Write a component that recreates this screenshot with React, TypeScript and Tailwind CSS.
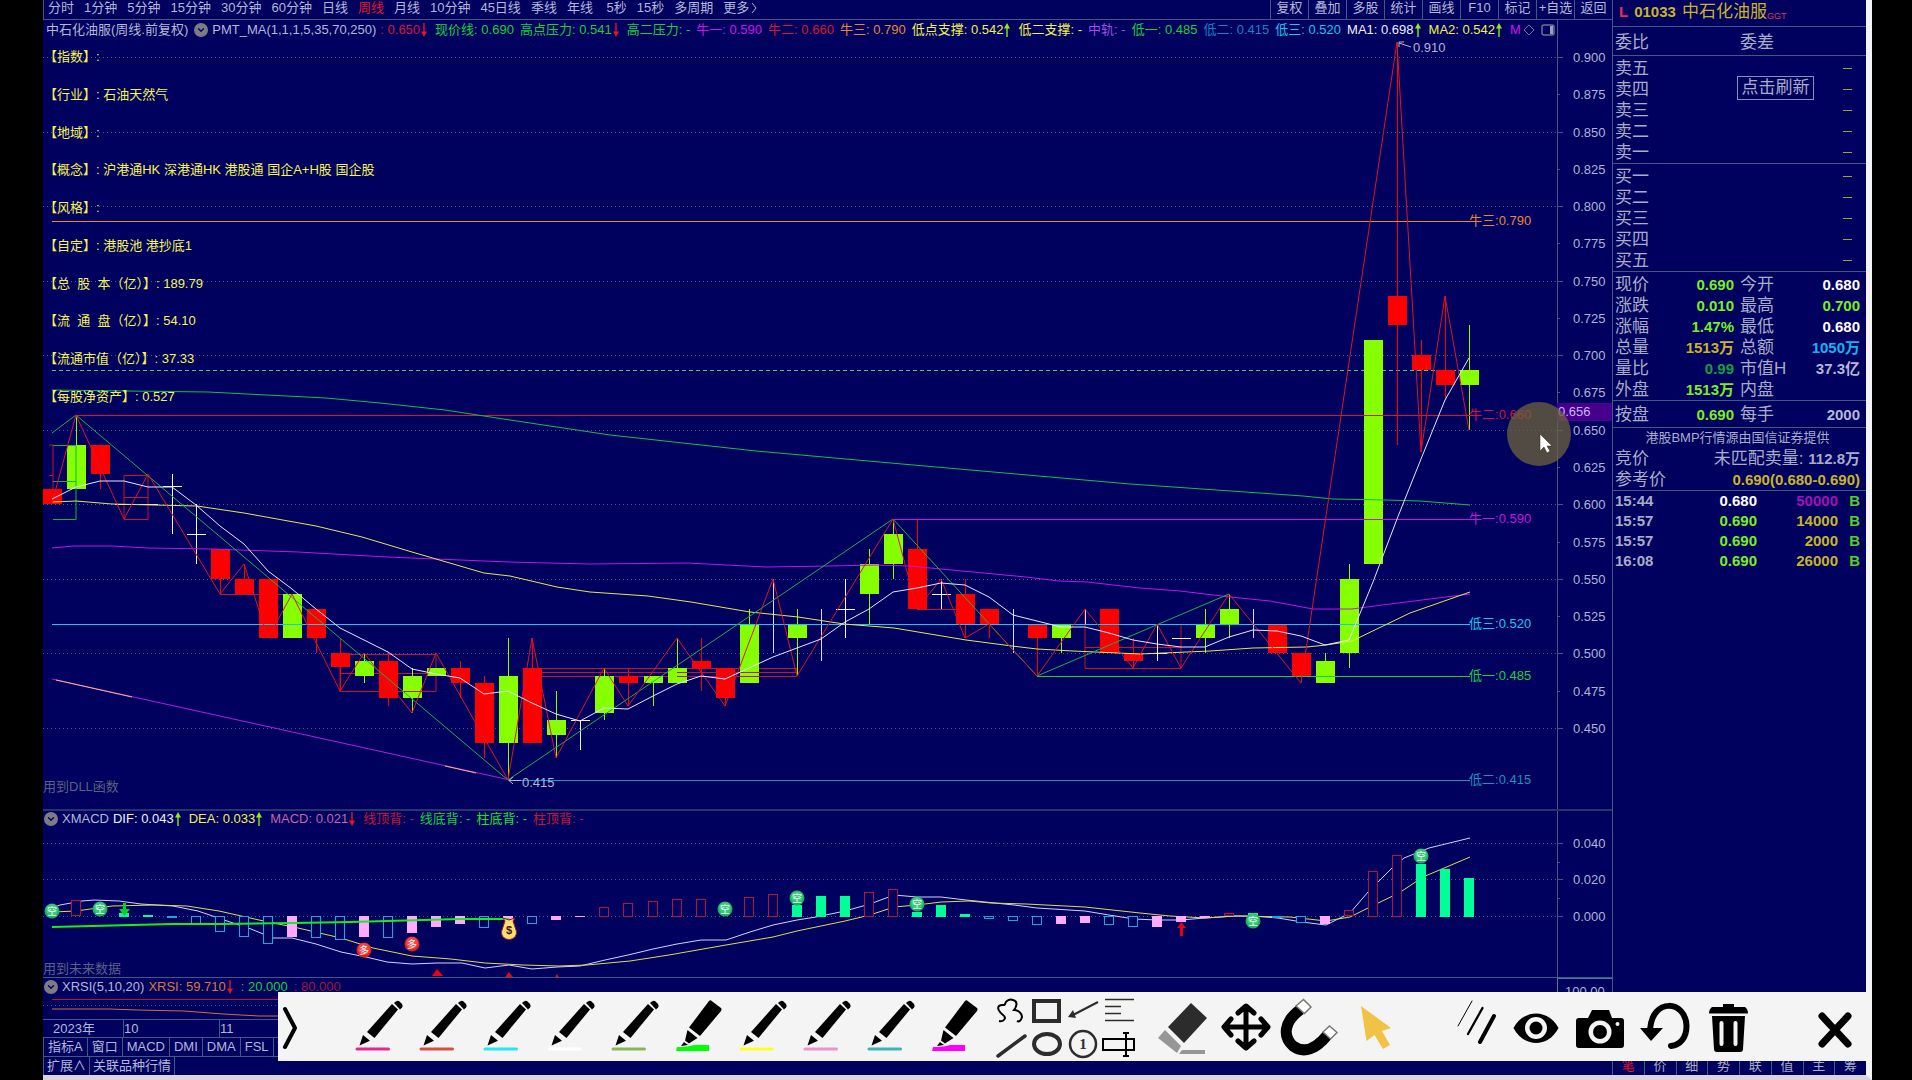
import type { ReactNode } from "react"
import { ChevronDown } from "lucide-react"

const FONT = "font-['Liberation_Sans','Noto_Sans_CJK_SC',sans-serif]"

type Candle = [top: number, bottom: number, high: number, low: number, kind: "up" | "down" | "doji" | "none"]

// one entry per week: body top, body bottom, high, low
const CANDLES: Candle[] = [
  [0.61, 0.6, 0.61, 0.6, "down"],
  [0.64, 0.61, 0.66, 0.61, "up"],
  [0.64, 0.62, 0.64, 0.61, "down"],
  [0.6, 0.6, 0.6, 0.6, "doji"],
  [0.6, 0.6, 0.6, 0.6, "doji"],
  [0.612, 0.612, 0.62, 0.58, "doji"],
  [0.58, 0.58, 0.6, 0.56, "doji"],
  [0.57, 0.55, 0.57, 0.54, "down"],
  [0.55, 0.54, 0.56, 0.54, "down"],
  [0.55, 0.51, 0.55, 0.51, "down"],
  [0.54, 0.51, 0.54, 0.51, "up"],
  [0.53, 0.51, 0.53, 0.5, "down"],
  [0.5, 0.491, 0.51, 0.475, "down"],
  [0.495, 0.485, 0.5, 0.48, "up"],
  [0.495, 0.47, 0.5, 0.465, "down"],
  [0.485, 0.47, 0.49, 0.46, "up"],
  [0.49, 0.485, 0.49, 0.485, "up"],
  [0.49, 0.48, 0.495, 0.47, "down"],
  [0.48, 0.44, 0.485, 0.43, "down"],
  [0.485, 0.44, 0.51, 0.415, "up"],
  [0.49, 0.44, 0.51, 0.44, "down"],
  [0.455, 0.445, 0.475, 0.43, "up"],
  [0.455, 0.455, 0.455, 0.435, "doji"],
  [0.485, 0.46, 0.49, 0.455, "up"],
  [0.485, 0.48, 0.49, 0.465, "down"],
  [0.485, 0.48, 0.485, 0.465, "up"],
  [0.49, 0.48, 0.51, 0.48, "up"],
  [0.495, 0.49, 0.51, 0.475, "down"],
  [0.49, 0.47, 0.49, 0.465, "down"],
  [0.52, 0.48, 0.53, 0.48, "up"],
  [0.52, 0.52, 0.55, 0.5, "none"],
  [0.52, 0.51, 0.53, 0.485, "up"],
  [0.51, 0.51, 0.53, 0.495, "none"],
  [0.53, 0.53, 0.55, 0.51, "doji"],
  [0.56, 0.54, 0.57, 0.52, "up"],
  [0.58, 0.56, 0.59, 0.55, "up"],
  [0.57, 0.53, 0.59, 0.53, "down"],
  [0.54, 0.54, 0.55, 0.53, "doji"],
  [0.54, 0.52, 0.55, 0.51, "down"],
  [0.53, 0.52, 0.53, 0.51, "down"],
  [0.52, 0.52, 0.53, 0.5, "none"],
  [0.52, 0.51, 0.52, 0.485, "down"],
  [0.52, 0.51, 0.52, 0.5, "up"],
  [0.52, 0.52, 0.53, 0.52, "none"],
  [0.53, 0.5, 0.53, 0.5, "down"],
  [0.5, 0.495, 0.51, 0.49, "down"],
  [0.5, 0.5, 0.52, 0.495, "doji"],
  [0.51, 0.51, 0.51, 0.51, "doji"],
  [0.52, 0.51, 0.53, 0.5, "up"],
  [0.53, 0.52, 0.54, 0.51, "up"],
  [0.52, 0.52, 0.53, 0.51, "none"],
  [0.52, 0.5, 0.52, 0.5, "down"],
  [0.5, 0.485, 0.5, 0.48, "down"],
  [0.495, 0.48, 0.5, 0.48, "up"],
  [0.55, 0.5, 0.56, 0.49, "up"],
  [0.71, 0.56, 0.71, 0.56, "up"],
  [0.74, 0.72, 0.91, 0.64, "down"],
  [0.7, 0.69, 0.71, 0.635, "down"],
  [0.69, 0.68, 0.74, 0.67, "down"],
  [0.69, 0.68, 0.72, 0.65, "up"],
]

const MA_FAST = [
  499, 487, 481, 481, 487, 487, 505, 526, 544, 571, 589, 609, 628, 640, 652, 669, 674, 678, 694, 691,
  703, 714, 721, 708, 709, 696, 684, 676, 679, 668, 657, 648, 639, 622, 609, 592, 588, 583, 585, 597,
  615, 621, 627, 627, 633, 640, 644, 647, 647, 637, 630, 631, 636, 645, 640, 582, 519, 459, 400, 358,
]

const MA_YELLOW =
  "52,502 76,501 112,504 197,506 244,513 316,526 362,537 412,552 484,573 510,576 557,587 590,592 648,596 691,602 750,612 798,617 844,624 894,628 966,640 1012,646 1037,649 1073,651 1140,654 1210,651 1253,648 1307,647 1326,645 1352,641 1410,613 1470,592"
const MA_MAGENTA =
  "52,548 73,546 112,546 148,548 212,549 298,552 387,557 509,562 590,564 687,563 766,567 830,566 876,565 909,566 941,569 1026,577 1059,581 1087,582 1140,588 1180,591 1230,597 1270,601 1313,609 1352,609 1390,604 1470,594"
const MA_GREEN =
  "52,390 126,391 208,392 247,394 326,398 380,403 445,410 510,420 590,432 610,435 756,451 902,464 1073,479 1130,484 1303,496 1333,499 1385,500 1420,501 1470,505"
const DIF =
  "52,908 60,905 82,901 94,900 119,901 141,904 173,906 198,911 230,922 251,929 273,938 292,938 316,944 341,952 366,957 387,962 412,964 437,963 462,963 485,968 509,965 532,969 557,967 580,966 605,960 628,955 653,949 677,944 701,940 726,940 750,932 773,925 797,920 816,917 845,911 870,904 894,895 917,897 941,897 966,900 1014,905 1037,908 1085,911 1109,915 1134,919 1157,920 1181,920 1205,918 1235,916 1252,916 1278,918 1302,922 1326,925 1350,913 1368,892 1393,867 1404,858 1429,848 1470,838"
const DEA =
  "52,912 76,911 112,906 155,905 187,906 219,911 259,920 298,928 341,938 373,948 412,956 451,959 485,963 523,965 559,966 587,965 630,961 669,955 726,945 773,937 797,931 845,921 870,915 894,907 917,905 941,902 969,901 991,903 1026,904 1085,907 1140,913 1170,916 1205,918 1235,916 1290,917 1326,921 1350,917 1374,905 1399,893 1423,877 1470,857"

const RED_ZIGZAG: [number, number][] = [
  [0, 0.601], [1, 0.66], [3, 0.59], [4, 0.62], [7, 0.54], [8, 0.56], [9, 0.51], [10, 0.54], [12, 0.475],
  [13, 0.5], [15, 0.46], [16, 0.5], [19, 0.415], [20, 0.51], [21, 0.43], [23, 0.49], [24, 0.465],
  [26, 0.51], [28, 0.465], [30, 0.55], [31, 0.485], [35, 0.59], [36, 0.53], [37, 0.55], [38, 0.51],
  [39, 0.52], [41, 0.485], [43, 0.53], [45, 0.49], [46, 0.52], [47, 0.49], [49, 0.54], [52, 0.48],
  [56, 0.91], [57, 0.635], [58, 0.74], [59, 0.65],
]
const GREEN_ZIGZAG: [number, number][] = [[0, 0.648], [1, 0.66], [19, 0.415], [35, 0.59], [41, 0.485], [49, 0.54]]

const LEVELS = [
  { from: 0, price: 0.79, color: "#e8853c", name: "牛三", value: "0.790" },
  { from: 1, price: 0.66, color: "#d4143c", name: "牛二", value: "0.660" },
  { from: 35, price: 0.59, color: "#c814dc", name: "牛一", value: "0.590" },
  { from: 0, price: 0.52, color: "#14c8f0", name: "低三", value: "0.520" },
  { from: 41, price: 0.485, color: "#14d23c", name: "低一", value: "0.485" },
  { from: 19, price: 0.415, color: "#1496be", name: "低二", value: "0.415" },
]

type Bar = [index: number, from: number, to: number, kind: "red" | "cyan" | "pink" | "green"]
const BARS: Bar[] = [
  [1, 900, 916, "red"], [3, 913, 917, "green"], [4, 915, 917, "green"], [5, 916, 918, "cyan"],
  [6, 916, 924, "cyan"], [7, 916, 932, "cyan"], [8, 916, 937, "cyan"], [9, 916, 944, "cyan"],
  [10, 916, 937, "pink"], [11, 916, 938, "cyan"], [12, 916, 940, "cyan"], [13, 916, 937, "pink"],
  [14, 916, 938, "cyan"], [15, 916, 933, "pink"], [16, 916, 927, "pink"], [17, 916, 924, "pink"],
  [18, 916, 928, "cyan"], [19, 916, 919, "pink"], [20, 916, 924, "cyan"], [21, 916, 920, "pink"],
  [22, 916, 917, "pink"], [23, 907, 917, "red"], [24, 903, 917, "red"], [25, 901, 917, "red"],
  [26, 899, 917, "red"], [27, 899, 917, "red"], [29, 897, 917, "red"], [30, 894, 917, "red"],
  [31, 905, 917, "green"], [32, 896, 917, "green"], [33, 896, 917, "green"], [34, 892, 917, "red"],
  [35, 889, 917, "red"], [36, 912, 917, "green"], [37, 905, 917, "green"], [38, 914, 917, "green"],
  [39, 916, 919, "cyan"], [40, 916, 921, "cyan"], [41, 916, 925, "cyan"], [42, 916, 924, "pink"],
  [43, 916, 923, "pink"], [44, 916, 925, "cyan"], [45, 916, 927, "cyan"], [46, 916, 927, "pink"],
  [47, 916, 922, "pink"], [48, 916, 918, "pink"], [49, 913, 916, "red"], [50, 913, 916, "green"],
  [51, 916, 918, "cyan"], [52, 916, 923, "cyan"], [53, 916, 924, "pink"], [54, 910, 916, "red"],
  [55, 871, 917, "red"], [56, 855, 917, "red"], [57, 864, 917, "green"], [58, 869, 917, "green"],
  [59, 878, 917, "green"],
]

const px = (i: number) => Math.round(52 + i * 24.02)
const py = (p: number) => Math.round(57 + (0.9 - p) * 1491)
const path = (pts: [number, number][]) => pts.map(([i, p]) => `${px(i)},${py(p)}`).join(" ")

const CANDLE_COLOR = { up: "#86ff00", down: "#ff0000", doji: "#f4f4ff", none: "#d8d8f0" }
const MAJOR = [0.9, 0.85, 0.8, 0.75, 0.7, 0.65, 0.6, 0.55, 0.5, 0.45]
const MINOR = [0.875, 0.825, 0.775, 0.725, 0.675, 0.625, 0.575, 0.525, 0.475]

function PriceChart() {
  return (
    <svg viewBox="43 20 1569 789" className="block h-auto w-full" fontSize={13}>
      <g stroke="#465590" strokeDasharray="1 3">
        {MAJOR.map((p) => (
          <line key={p} x1={43} x2={1557} y1={py(p) + 0.5} y2={py(p) + 0.5} />
        ))}
      </g>
      <line x1={52} x2={1470} y1={370.5} y2={370.5} stroke="#3cd264" strokeDasharray="4 3" />

      <g fill="none">
        <polyline points="52,679 510,780" stroke="#b41ee0" />
        <polyline points="56,680 132,697" stroke="#ffb08c" />
        <polyline points="445,766 476,773" stroke="#ffb08c" />
        <g stroke="#c81428">
          <path d="M49 445H53V489M49 475.5H53" />
          <path d={`M${px(3)} 475.5H${px(4)}V519.5H${px(3)}ZM${px(3)} 497.5H${px(4)}`} />
          <path d={`M${px(7)} 594.5H${px(10)}`} />
          <path d={`M${px(12)} 654.5H${px(16)}V691.5H${px(12)}ZM${px(12)} 673.5H${px(16)}`} />
          <path d={`M${px(20)} 668.5H${px(31)}M${px(20)} 672.5H${px(31)}M${px(20)} 676.5H${px(31)}V668`} />
          <path d={`M${px(36)} 609.5H${px(38)}`} />
          <path d={`M${px(43)} 609V668.5H${px(47)}V624M${px(43)} 647.5H${px(47)}`} />
        </g>
      </g>

      {CANDLES.map(([top, bottom, high, low, kind], i) => (
        <g key={i} fill={CANDLE_COLOR[kind]}>
          {high > low && (
            <rect x={px(i)} y={py(high)} width={1} height={py(low) - py(high)} />
          )}
          {kind !== "none" && (
            <rect x={px(i) - 9} y={py(top)} width={19} height={Math.max(py(bottom) - py(top), 1)} />
          )}
        </g>
      ))}
      <path d="M53 445.5H76V519.5H53M53 481.5H76" fill="none" stroke="#14b43c" />
      <path
        d={`M${px(12)} 691.5H${px(16)}M${px(26)} 672.5H${px(31)}M${px(26)} 676.5H${px(31)}`}
        fill="none"
        stroke="#c81428"
      />

      {LEVELS.map((l) => (
        <g key={l.name}>
          <line x1={px(l.from)} x2={1470} y1={py(l.price) + 0.5} y2={py(l.price) + 0.5} stroke={l.color} />
          <text x={1469} y={py(l.price) + 4} fill={l.color}>{l.name}:{l.value}</text>
        </g>
      ))}

      <g fill="none">
        <polyline points={MA_GREEN} stroke="#14be50" />
        <polyline points={MA_MAGENTA} stroke="#c014e6" />
        <polyline points={MA_YELLOW} stroke="#e6e650" />
        <polyline points={path(GREEN_ZIGZAG)} stroke="#14b44b" />
        <polyline points={path(RED_ZIGZAG)} stroke="#dc1428" />
        <polyline points={MA_FAST.map((y, i) => `${px(i)},${y}`).join(" ")} stroke="#e6e6ff" />
      </g>

      <g fill="none" stroke="#b4b4d2">
        <path d="M1399 43L1411 47M1399 47V42H1404" />
        <path d="M509 780.5H521M513 777L509 780.5L513 784" />
      </g>
      <g fill="#b4b4d2">
        <text x={1413} y={52}>0.910</text>
        <text x={522} y={787}>0.415</text>
        <text x={43} y={791} fill="#5c6080">用到DLL函数</text>
      </g>

      <g stroke="#3c5a82">
        <line x1={1557.5} x2={1557.5} y1={20} y2={809} />
        {MAJOR.map((p) => <line key={p} x1={1557} x2={1563} y1={py(p) + 0.5} y2={py(p) + 0.5} />)}
        {MINOR.map((p) => <line key={p} x1={1557} x2={1560} y1={py(p) + 0.5} y2={py(p) + 0.5} />)}
      </g>
      <g fill="#b0b4d4">
        {[...MAJOR, ...MINOR].map((p) => <text key={p} x={1573} y={py(p) + 5}>{p.toFixed(3)}</text>)}
      </g>
      <rect x={1557} y={403} width={55} height={18} fill="#46008c" />
      <text x={1558} y={416} fill="#c8b4ff">0.656</text>

      <circle cx={1539} cy={434} r={32} fill="#6e643c" fillOpacity={0.75} />
      <path d="M1540 434V451L1544 447L1547 453L1550 451L1547 446L1552 446Z" fill="#fff" stroke="#222" strokeWidth={0.5} />
    </svg>
  )
}

function Badge({ i, y, glyph }: { i: number; y: number; glyph: "空" | "多" }) {
  return (
    <g>
      <circle cx={px(i)} cy={y} r={7.5} fill={glyph === "空" ? "#14b45a" : "#e61e1e"} />
      <circle cx={px(i)} cy={y - 1} r={6} fill={glyph === "空" ? "#3cc87d" : "#f04646"} />
      <text x={px(i)} y={y + 4} fontSize={10} textAnchor="middle" fill="#f0fff4">{glyph}</text>
    </g>
  )
}

const BAR_COLOR = { red: "#b4143c", cyan: "#14aadc", pink: "#ffaaff", green: "#00ff96" }

function MacdChart() {
  return (
    <svg viewBox="43 811 1569 166" className="block h-auto w-full" fontSize={13}>
      <g stroke="#465590" strokeDasharray="1 3">
        <path d="M43 843.5H1557M43 879.5H1557M43 916.5H1557" />
      </g>
      <g fill="none">
        <polyline points={DIF} stroke="#d2d2ff" />
        <polyline points={DEA} stroke="#dcdc50" />
      </g>
      {BARS.map(([i, a, b, kind]) => {
        const solid = kind === "pink" || kind === "green" || b - a < 3
        return (
          <rect
            key={i}
            x={px(i) - (solid ? 5 : 4.5)}
            y={solid ? a : a + 0.5}
            width={solid ? 10 : 9}
            height={solid ? b - a : b - a - 1}
            fill={solid ? BAR_COLOR[kind] : "#00005e"}
            stroke={solid ? "none" : BAR_COLOR[kind]}
          />
        )
      })}
      <polyline points="52,927 173,924 223,924 294,923 351,922 459,919 509,919" fill="none" stroke="#14f014" strokeWidth={2} />
      <Badge i={0} y={911} glyph="空" />
      <Badge i={2} y={909} glyph="空" />
      <Badge i={28} y={909} glyph="空" />
      <Badge i={31} y={898} glyph="空" />
      <Badge i={36} y={904} glyph="空" />
      <Badge i={50} y={921} glyph="空" />
      <Badge i={57} y={856} glyph="空" />
      <Badge i={13} y={950} glyph="多" />
      <Badge i={15} y={944} glyph="多" />
      <path d="M123 903H126V909H130L124.500 916L119 909H123Z" fill="#00d228" />
      <path d="M1180 936V928H1177L1181.500 922L1186 928H1183V936Z" fill="#e60014" />
      <path d="M432 976L437 969L443 976ZM505 977L509 972L513 977ZM555 977L557 974L559 977Z" fill="#f00014" />
      <g>
        <path d="M505 921L503 918L509 920L515 918L513 921L516 930A7.500 7 0 1 1 502 930Z" fill="#ffdc78" stroke="#8c2814" />
        <text x={509} y={934} fontSize={11} fontWeight="bold" textAnchor="middle" fill="#3c1400">$</text>
      </g>
      <text x={43} y={973} fill="#5c6080">用到未来数据</text>
      <path d="M1557.500 811V977M1557 843.500H1563M1557 879.500H1563M1557 916.500H1563M1557 862.500H1560M1557 898.500H1560" stroke="#3c5a82" />
      <g fill="#b0b4d4">
        <text x={1573} y={848}>0.040</text>
        <text x={1573} y={884}>0.020</text>
        <text x={1573} y={921}>0.000</text>
      </g>
    </svg>
  )
}

function RsiChart() {
  return (
    <svg viewBox="43 978 1569 41" className="block h-auto w-full" fontSize={13}>
      <line x1={43} x2={1557} y1={1005.5} y2={1005.5} stroke="#465590" strokeDasharray="1 3" />
      <line x1={52} x2={1470} y1={999.5} y2={999.5} stroke="#b4143c" />
      <polyline points="52,1009 110,1009 137,1010 184,1011 223,1014 259,1016 278,1016" fill="none" stroke="#d26e3c" />
      <path d="M1557.500 978V1019M1557 978.500H1612" stroke="#3c8296" />
      <text x={1565} y={996} fill="#b0b4d4">100.00</text>
    </svg>
  )
}

function Arrow({ up }: { up?: boolean }) {
  return (
    <svg viewBox="0 0 8 14" className={`h-3.5 w-2 shrink-0 ${up ? "text-[#86f01e]" : "rotate-180 text-[#e61428]"}`}>
      <path d="M4 14V3" stroke="currentColor" strokeWidth={1.4} />
      <path d="M1 5.500L4 0L7 5.500Z" fill="currentColor" />
    </svg>
  )
}

interface ReadingProps {
  name?: string
  value: string
  color: string
  arrow?: "up" | "down"
}

function Reading({ name = "", value, color, arrow }: ReadingProps) {
  return (
    <span className={`flex items-center ${color} ${arrow ? "pr-[7px]" : "pr-1.5"}`}>
      {name}: {value}
      {arrow && <Arrow up={arrow === "up"} />}
    </span>
  )
}

function Collapse({ label }: { label: string }) {
  return (
    <button aria-label={label} className="flex size-3.5 items-center justify-center rounded-full bg-[#7c7c84] text-[#00005e]">
      <ChevronDown size={10} strokeWidth={3} />
    </button>
  )
}

const PERIODS = [
  "分时", "1分钟", "5分钟", "15分钟", "30分钟", "60分钟", "日线", "周线", "月线",
  "10分钟", "45日线", "季线", "年线", " 5秒", "15秒", "多周期",
]
const ACTIONS = ["复权", "叠加", "多股", "统计", "画线", "F10", "标记", "+自选", "返回"]

const FACTS = [
  "【指数】:", "【行业】: 石油天然气", "【地域】:", "【概念】: 沪港通HK 深港通HK 港股通 国企A+H股 国企股",
  "【风格】:", "【自定】: 港股池 港抄底1", "【总  股  本（亿）】: 189.79", "【流  通  盘（亿）】: 54.10",
  "【流通市值（亿）】: 37.33", "【每股净资产】: 0.527",
]

function PeriodBar() {
  return (
    <nav className="flex h-5 items-stretch border-b border-l border-[#3c5a82] text-[13px] leading-4 text-[#b4b8d8]">
      <div className="flex flex-1 items-start gap-2.5 pl-1">
        {PERIODS.map((p) => (
          <button key={p} className={p === "周线" ? "whitespace-pre text-[#e61428]" : "whitespace-pre"}>{p}</button>
        ))}
        <button className="flex items-center">
          更多
          <svg viewBox="0 0 10 14" className="h-3.5 w-2.5" fill="none" stroke="currentColor"><path d="M3 2L7 7L3 12" /></svg>
        </button>
      </div>
      <div className="flex">
        {ACTIONS.map((a) => (
          <button key={a} className="w-[38px] border-l border-[#3c5a82] pb-1 whitespace-nowrap">{a}</button>
        ))}
      </div>
    </nav>
  )
}

function ChartColumn() {
  return (
    <main className="flex min-w-0 flex-1 flex-col border-r border-[#3c5a82]">
      <PeriodBar />
      <section className="relative border-b-2 border-[#28346e]">
        <PriceChart />
        <div className="absolute inset-x-0 top-0 flex h-5 items-center pl-[3px] text-[13px] whitespace-pre">
          <span className="pr-1.5 text-[#b4b8d8]">中石化油服(周线.前复权)</span>
          <Collapse label="主图指标" />
          <span className="px-1 text-[#b4b8d8]">PMT_MA(1,1,1,5,35,70,250)</span>
          <Reading value="0.650" color="text-[#dc1432]" arrow="down" />
          <Reading name="现价线" value="0.690" color="text-[#14d23c]" />
          <Reading name="高点压力" value="0.541" color="text-[#14d23c]" arrow="down" />
          <Reading name="高二压力" value="-" color="text-[#14d23c]" />
          <Reading name="牛一" value="0.590" color="text-[#d214e6]" />
          <Reading name="牛二" value="0.660" color="text-[#dc1432]" />
          <Reading name="牛三" value="0.790" color="text-[#e8853c]" />
          <Reading name="低点支撑" value="0.542" color="text-[#f0f050]" arrow="up" />
          <Reading name="低二支撑" value="-" color="text-[#f0f050]" />
          <Reading name="中轨" value="-" color="text-[#a050e6]" />
          <Reading name="低一" value="0.485" color="text-[#14d23c]" />
          <Reading name="低二" value="0.415" color="text-[#1482c8]" />
          <Reading name="低三" value="0.520" color="text-[#14c8f0]" />
          <Reading name="MA1" value="0.698" color="text-[#f0f0ff]" arrow="up" />
          <Reading name="MA2" value="0.542" color="text-[#f0f050]" arrow="up" />
          <span className="w-3 text-[#d214e6]">M</span>
          <svg viewBox="0 0 40 14" className="h-3.5 w-10" fill="none" stroke="#6c7094">
            <path d="M7 2L12 7L7 12L2 7Z" />
            <rect x={20} y={2} width={12} height={10} rx={2} strokeWidth={1.5} />
            <rect x={28} y={3} width={3} height={8} fill="#9ca0b8" stroke="none" />
          </svg>
        </div>
        <ul className="absolute top-7 left-px flex h-[358px] flex-col justify-between text-[13px] leading-[18px] whitespace-pre text-[#f4f450]">
          {FACTS.map((f) => <li key={f}>{f}</li>)}
        </ul>
      </section>
      <section className="relative border-b border-[#3c5a82]">
        <MacdChart />
        <div className="absolute top-0 left-0 flex h-4 items-center pl-px text-[13px] whitespace-pre">
          <Collapse label="XMACD" />
          <span className="px-1 text-[#b4b8d8]">XMACD</span>
          <Reading name="DIF" value="0.043" color="text-[#f0f0ff]" arrow="up" />
          <Reading name="DEA" value="0.033" color="text-[#f0f050]" arrow="up" />
          <Reading name="MACD" value="0.021" color="text-[#c864aa]" arrow="down" />
          <Reading name="线顶背" value="-" color="text-[#c81432]" />
          <Reading name="线底背" value="-" color="text-[#14d23c]" />
          <Reading name="柱底背" value="-" color="text-[#14e632]" />
          <Reading name="柱顶背" value="-" color="text-[#c81432]" />
        </div>
      </section>
      <section className="relative border-b border-[#3c5a82]">
        <RsiChart />
        <div className="absolute top-0 left-0 flex h-[18px] items-center pl-px text-[13px] whitespace-pre">
          <Collapse label="XRSI" />
          <span className="px-1 text-[#b4b8d8]">XRSI(5,10,20)</span>
          <Reading name="XRSI" value="59.710" color="text-[#dc783c]" arrow="down" />
          <Reading value="20.000" color="text-[#14d23c]" />
          <Reading value="80.000" color="text-[#a0143c]" />
        </div>
      </section>
      <div className="flex h-[17px] items-center text-[13px] text-[#b4b8d8]">
        <span className="w-20 pl-2.5">2023年</span>
        <span className="h-full w-24 border-l border-[#3c5a82] leading-[17px]">10</span>
        <span className="h-full flex-1 border-l border-[#3c5a82] leading-[17px]">11</span>
      </div>
      <div className="flex h-[19px] items-stretch divide-x divide-[#3c5a82] border-t border-l border-[#3c5a82] text-[13px] leading-[18px] whitespace-nowrap text-[#b4b8d8]">
        {["指标A", "窗口", "MACD", "DMI", "DMA", "FSL", "TRIX"].map((t) => (
          <button key={t} className="px-1">{t}</button>
        ))}
      </div>
      <div className="flex h-[19px] items-stretch divide-x divide-[#3c5a82] border-t border-l border-[#3c5a82] text-[13px] leading-[18px] whitespace-nowrap text-[#b4b8d8]">
        <button className="px-[3px]">扩展∧</button>
        <button className="px-[3px]">关联品种行情</button>
        <span />
      </div>
    </main>
  )
}

const STATS = [
  ["现价", "0.690", "text-[#78f01e]", "今开", "0.680", "text-white"],
  ["涨跌", "0.010", "text-[#78f01e]", "最高", "0.700", "text-[#78f01e]"],
  ["涨幅", "1.47%", "text-[#78f01e]", "最低", "0.680", "text-white"],
  ["总量", "1513万", "text-[#c8b428]", "总额", "1050万", "text-[#14b4f0]"],
  ["量比", "0.99", "text-[#14a03c]", "市值H", "37.3亿", "text-[#b4b8d8]"],
  ["外盘", "1513万", "text-[#78f01e]", "内盘", "", ""],
]

const TICKS = [
  ["15:44", "0.680", "text-white", "50000", "text-[#a014b4]"],
  ["15:57", "0.690", "text-[#78f01e]", "14000", "text-[#c8b428]"],
  ["15:57", "0.690", "text-[#78f01e]", "2000", "text-[#c8b428]"],
  ["16:08", "0.690", "text-[#78f01e]", "26000", "text-[#c8b428]"],
]

function Depth({ labels }: { labels: string[] }) {
  return (
    <ul className="border-b border-[#3c5a82] pt-0.5 pr-3.5 pl-0.5">
      {labels.map((l) => (
        <li key={l} className="flex h-[21px] items-center justify-between">
          {l}
          <span className="h-px w-[9px] bg-[#a0a03c]" aria-label="-" />
        </li>
      ))}
    </ul>
  )
}

function StatRow({ row }: { row: string[] }) {
  const [l1, v1, c1, l2, v2, c2] = row
  return (
    <tr className="h-[21px]">
      <th className="w-11 text-left font-normal">{l1}</th>
      <td className={`w-[81px] pr-1.5 text-right text-[15px] font-bold ${c1}`}>{v1}</td>
      <th className="w-14 text-left font-normal">{l2}</th>
      <td className={`text-right text-[15px] font-bold ${c2}`}>{v2}</td>
    </tr>
  )
}

function QuotePanel() {
  return (
    <aside className="flex w-[253px] shrink-0 flex-col text-[17px] leading-[21px] whitespace-nowrap text-[#a8acc8]">
      <h1 className="flex h-[27px] items-center gap-1.5 border-b border-[#3c5a82] pb-1 pl-1.5 text-[#c8b428]">
        <span className="text-[15px] font-bold text-[#e6325a]">L</span>
        <span className="text-[15px] font-bold">01033</span>
        <span>中石化油服<sub className="text-[9px] text-[#e6325a]">GGT</sub></span>
      </h1>
      <div className="flex h-[29px] items-center border-b border-[#3c5a82] pt-0.5 pl-0.5">
        <span className="w-[125px]">委比</span>
        <span>委差</span>
      </div>
      <div className="relative">
        <Depth labels={["卖五", "卖四", "卖三", "卖二", "卖一"]} />
        <button className="absolute top-5 left-[124px] h-6 w-[77px] border border-[#8890b8] text-center leading-[22px]">点击刷新</button>
      </div>
      <Depth labels={["买一", "买二", "买三", "买四", "买五"]} />
      <div className="border-b border-[#3c5a82] pt-0.5 pr-1.5 pl-0.5">
        <table className="w-full table-fixed">
          <tbody>{STATS.map((r) => <StatRow key={r[0]} row={r} />)}</tbody>
        </table>
      </div>
      <div className="border-b border-[#3c5a82] pt-[3px] pr-1.5 pb-0.5 pl-0.5">
        <table className="w-full table-fixed">
          <tbody><StatRow row={["按盘", "0.690", "text-[#78f01e]", "每手", "2000", "text-[#b4b8d8]"]} /></tbody>
        </table>
      </div>
      <div className="border-b border-[#3c5a82] pr-1.5 pl-0.5">
        <p className="h-5 text-center text-[13px] leading-5">港股BMP行情源由国信证券提供</p>
        <p className="flex justify-between">竞价<span>未匹配卖量: <b className="text-[15px]">112.8万</b></span></p>
        <p className="flex justify-between">参考价<b className="text-[15px] text-[#c8b428]">0.690(0.680-0.690)</b></p>
      </div>
      <table className="mr-1.5 ml-0.5 table-fixed text-[15px] font-bold">
        <tbody>
          {TICKS.map(([time, price, pc, vol, vc], i) => (
            <tr key={i} className="h-5 leading-5">
              <td className="w-[70px]">{time}</td>
              <td className={`w-[72px] text-right ${pc}`}>{price}</td>
              <td className={`text-right ${vc}`}>{vol}</td>
              <td className="w-[22px] text-right text-[#50d21e]">B</td>
            </tr>
          ))}
        </tbody>
      </table>
      <div className="mt-auto flex h-[19px] divide-x divide-[#3c5a82] border-t border-[#3c5a82] text-[13px] leading-4">
        {["笔", "价", "细", "势", "联", "值", "主", "筹"].map((t) => (
          <button key={t} className={t === "笔" ? "flex-1 text-[#e61428]" : "flex-1"}>{t}</button>
        ))}
      </div>
    </aside>
  )
}

function Tool({ label, className = "w-16", children }: { label: string; className?: string; children: ReactNode }) {
  return (
    <button aria-label={label} className={`shrink-0 ${className}`}>
      <svg viewBox="0 0 64 69" className="block h-[69px] w-16">{children}</svg>
    </button>
  )
}

function Pen({ color }: { color: string }) {
  return (
    <Tool label="画笔">
      <path d="M19.500 53.500L23 43L30 48.700Z" />
      <path d="M27 40L52 12L58 17.500L34.500 46Z" />
      <path d="M54 11L56 9.500Q58 8 60 10L62 12Q63.500 14 62 15.500L60 17.500Z" />
      <path d="M17 57H48.500" stroke={color} strokeWidth={3} strokeLinecap="round" />
    </Tool>
  )
}

function Marker({ color }: { color: string }) {
  return (
    <Tool label="荧光笔">
      <path d="M17 55Q28 55 34 53H49V59H16Z" fill={color} />
      <path d="M51 8.500L61 16Q62 17 61 19L40 44L29 35.500L49 9Q50 8 51 8.500Z" />
      <path d="M27.500 38L37.500 46L29 51.500L25 48.500Z" />
      <path d="M24 50L28 53L21 54Z" />
    </Tool>
  )
}

function Shape({ label, children }: { label: string; children: ReactNode }) {
  return (
    <button aria-label={label}>
      <svg viewBox="0 0 36 33" className="block h-[33px] w-9 overflow-visible" fill="none" stroke="#2c2c2c" strokeWidth={2.5}>
        {children}
      </svg>
    </button>
  )
}

function DrawToolbar() {
  return (
    <div className="absolute right-0 bottom-3.5 left-[235px] flex h-[69px] items-center bg-[#f4f4f4]">
      <Tool label="收起" className="w-[62px]">
        <path d="M7 17L17 36L7 55" fill="none" stroke="#000" strokeWidth={4} strokeLinecap="round" strokeLinejoin="round" />
      </Tool>
      <Pen color="#e6288c" />
      <Pen color="#d25046" />
      <Pen color="#28e6f0" />
      <Pen color="#ffffff" />
      <Pen color="#8cb45a" />
      <Marker color="#00ff00" />
      <Pen color="#ffff28" />
      <Pen color="#e696c8" />
      <Pen color="#3cb4b4" />
      <Marker color="#ff00ff" />
      <div className="ml-3 grid shrink-0 grid-cols-4 pt-[3px]">
        <Shape label="自由曲线">
          <path d="M7 26C12 27 15 23 11 20C7 17 5 13 7 11C9 9 13 11 13 9C14 5 18 4 21 5C26 6 25 11 22 15C26 15 30 18 30 22C29 26 27 27 25 26" stroke="#000" strokeWidth={2} />
        </Shape>
        <Shape label="矩形"><rect x={6} y={6} width={25} height={20} strokeWidth={4} /></Shape>
        <Shape label="箭头">
          <path d="M34 7L9 20" strokeWidth={2} />
          <path d="M4 22L9 15L12 23Z" fill="#2c2c2c" stroke="none" />
        </Shape>
        <Shape label="文字"><path d="M5 4.500H34M5 11.500H21M5 18.500H21M5 25.500H34" strokeWidth={1.5} /></Shape>
        <Shape label="直线"><path d="M6 28L33 8" strokeWidth={3.5} strokeLinecap="round" /></Shape>
        <Shape label="椭圆"><ellipse cx={19} cy={16} rx={13} ry={10} strokeWidth={4} /></Shape>
        <Shape label="序号">
          <circle cx={19} cy={16} r={13} />
          <text x={19} y={21} textAnchor="middle" fontSize={15} fontWeight="bold" fontFamily="Liberation Serif" fill="#2c2c2c" stroke="none">1</text>
        </Shape>
        <Shape label="文本框">
          <path d="M3 11H34V22H3ZM26 5V28M23 5H29M23 28H29" stroke="#000" strokeWidth={2} />
        </Shape>
      </div>
      <Tool label="橡皮擦" className="ml-3.5 w-16">
        <path d="M41 11L57 26L34 51L18 35Z" fill="#2c2c2c" />
        <path d="M15 38L31 54L27 61L8 46Z" fill="#969696" />
        <path d="M32 58H55V62H29Z" fill="#969696" />
      </Tool>
      <Tool label="移动">
        <path d="M32 15V55M12 35H52M24 21L32 14L40 21M24 49L32 56L40 49M17 27L10 35L17 43M47 27L54 35L47 43" fill="none" stroke="#000" strokeWidth={5} strokeLinecap="round" strokeLinejoin="round" />
      </Tool>
      <Tool label="磁铁">
        <path d="M22.500 17.500C5 30 5 45 15 54C26 62 38 57 49 43.500" fill="none" stroke="#000" strokeWidth={11} />
        <path d="M18 14L25.500 7.500L33 15L26.500 21.500Z" fill="#fff" stroke="#777" strokeWidth={1.5} />
        <path d="M45 40L51.500 34L59 40.500L52.500 47Z" fill="#fff" stroke="#777" strokeWidth={1.5} />
      </Tool>
      <Tool label="选择">
        <path d="M19 14L49 36L40 39L48 53L41 57L32.500 43L24.500 49Z" fill="#f0c346" />
      </Tool>
      <Tool label="线宽" className="ml-[34px] w-16">
        <g stroke="#000" strokeLinecap="round">
          <path d="M18 34L32 9" strokeWidth={1} />
          <path d="M28 42L42.500 16" strokeWidth={2.300} />
          <path d="M40 50L54 24" strokeWidth={4} />
        </g>
      </Tool>
      <Tool label="显示">
        <path d="M9.500 36C20 16.500 44 16.500 54.500 36C44 56 20 56 9.500 36Z" />
        <circle cx={32} cy={36} r={11} fill="#f4f4f4" />
        <circle cx={32} cy={36} r={6.500} />
      </Tool>
      <Tool label="截图">
        <path d="M11 26H20L24 18H41L44 26H53Q56 26 56 29V53Q56 56 53 56H11Q8 56 8 53V29Q8 26 11 26Z" />
        <circle cx={32} cy={40} r={11.500} fill="#f4f4f4" />
        <circle cx={32} cy={40} r={7} />
        <circle cx={49.500} cy={32} r={2} fill="#f4f4f4" />
      </Tool>
      <Tool label="撤销">
        <path d="M18 38C20 5 54 8 54.500 34C54.500 46 48 53 39 54" fill="none" stroke="#000" strokeWidth={6} strokeLinecap="round" />
        <path d="M8 36H31L19 49Z" />
      </Tool>
      <Tool label="删除">
        <path d="M27 15V12H38V15H49Q52 17 52 21.500H13Q13 17 16 15Z" />
        <path d="M16 24H49L47 57Q47 60 44 60H21Q18 60 18 57Z" />
        <path d="M25.500 31V52M39.500 31V52" stroke="#f4f4f4" strokeWidth={4} strokeLinecap="round" />
      </Tool>
      <Tool label="关闭" className="mr-1 ml-auto w-16">
        <path d="M18 24L44 52M44 24L18 52" stroke="#000" strokeWidth={7} strokeLinecap="round" />
      </Tool>
    </div>
  )
}

export default function App() {
  return (
    <div className={`min-h-screen bg-black pr-10 pl-[43px] ${FONT}`}>
      <div className="relative border-r-[6px] border-b-[5px] border-r-[#f4f4f8] border-b-[#dcd4dc] bg-[#00005e]">
        <div className="flex">
          <ChartColumn />
          <QuotePanel />
        </div>
        <div className="absolute inset-y-0 -right-1.5 left-0 flex items-end">
          <DrawToolbar />
        </div>
      </div>
    </div>
  )
}
